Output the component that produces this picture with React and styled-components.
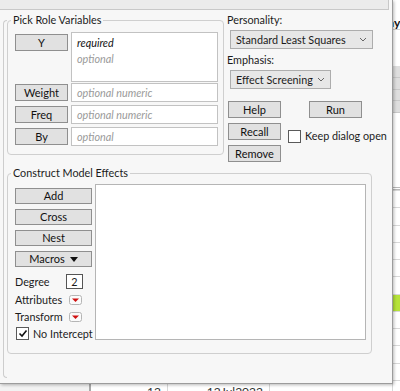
import React from 'react'
import styled, { createGlobalStyle } from 'styled-components'

const GlobalStyle = createGlobalStyle`
  html, body { margin: 0; padding: 0; background: #fff; }
  * { box-sizing: border-box; }
`

const Stage = styled.div`
  position: relative;
  width: 400px;
  height: 391px;
  overflow: hidden;
  background: #fff;
  font-family: Lato, "Open Sans", sans-serif;
  font-size: 10.8px;
  color: #1b1b1b;
  white-space: nowrap;
`

/* data table behind the dialog */
const Table = styled.div`
  display: flex;
  flex-direction: column;
  width: 400px;
`
const HeadRow = styled.div`
  display: grid;
  grid-template-columns: 379px 1fr;
  height: 30px;
  padding-top: 16px;
  line-height: 14px;
  border-bottom: 1px solid #d0d0d0;
  font-weight: 700;
  font-size: 12px;
  color: #111;
`
const Spacer = styled.div`
  height: ${p => p.$h}px;
  flex: none;
  border-bottom: ${p => (p.$double ? '3px double #b8b8b8' : 'none')};
`
const BandRow = styled.div`
  height: 11.75px;
  flex: none;
  background: #dedede;
  border-bottom: 1px solid #c9c9c9;
`
const BodyRow = styled.div`
  display: grid;
  grid-template-columns: 91px 77px 102px 123px 1fr;
  height: 17.25px;
  flex: none;
  border-top: 1px solid #d8d8d8;
`
const Cell = styled.div`
  border-right: ${p => (p.$head ? '2px solid #a9a9a9' : '1px solid #d8d8d8')};
  background: ${p => (p.$lime ? '#b6e33a' : p.$head ? '#f2f2f2' : 'transparent')};
  text-align: right;
  padding: 3px 6px 0;
  line-height: 16px;
  color: #333;
  font-size: 12px;
`

/* dialog */
const Dialog = styled.div`
  position: absolute;
  top: 0;
  left: 0;
  width: 393px;
  height: 384px;
  background: #f7f7f7;
  border-right: 1px solid #9c9c9c;
  border-bottom: 1px solid #9c9c9c;
  box-shadow: 1px 1px 3px rgba(0, 0, 0, 0.28);
  display: flex;
  flex-direction: column;
`
const TopStrip = styled.div`
  width: 389px;
  height: 10px;
  flex: none;
  background: #ebebeb;
  border-bottom: 1px solid #c8c8c8;
  border-right: 1px solid #c8c8c8;
`
const Body = styled.div`
  display: flex;
  align-items: flex-start;
  flex: 1;
  padding-left: 3px;
`
const FrameEdge = styled.div`
  flex: none;
  width: 4px;
  height: 358px;
  margin-top: 10px;
  border: 1px solid #cdcdcd;
  border-right: none;
  border-radius: 4px 0 0 4px;
`
const Content = styled.div`
  flex: 1;
  padding-top: 3px;
  display: grid;
  grid-template-columns: 217px 1fr;
  column-gap: 3px;
  align-items: start;
  align-content: start;
`
const Group = styled.fieldset`
  margin: ${p => (p.$wide ? '4px 0 0' : '0')};
  grid-column: ${p => (p.$wide ? '1 / -1' : 'auto')};
  width: ${p => (p.$wide ? '365px' : 'auto')};
  min-width: 0;
  padding: ${p => (p.$wide ? '4px 5px 11px 7px' : '5px 5px 8px 7px')};
  border: 1px solid #cfcfcf;
  border-radius: 4px;
`
const Legend = styled.legend`
  margin-left: -4px;
  padding: 0 2px;
  line-height: 14px;
  color: #1b1b1b;
`

/* pick role */
const Roles = styled.div`
  display: flex;
  flex-direction: column;
  gap: 3px;
`
const RoleRow = styled.div`
  display: flex;
  gap: 3px;
  align-items: ${p => (p.$top ? 'flex-start' : 'center')};
  margin-bottom: ${p => (p.$top ? '-2px' : '0')};
`
const Button = styled.button`
  flex: none;
  width: ${p => p.$w || 53}px;
  height: ${p => p.$h || 17}px;
  margin: ${p => p.$m || 0};
  padding: 0;
  border: 1px solid #8f8f8f;
  background: #e1e1e1;
  font-family: inherit;
  font-size: 11px;
  line-height: 14px;
  color: #111;
  display: flex;
  align-items: center;
  justify-content: center;
  gap: 5px;
`
const ListBox = styled.div`
  flex: 1;
  height: 50px;
  padding: 2px 5px;
  background: #fff;
  border: 1px solid #c2c2c2;
  line-height: 16px;
`
const Field = styled.div`
  flex: 1;
  height: 19px;
  padding: 0 5px;
  background: #fff;
  border: 1px solid #c2c2c2;
  line-height: 17px;
`
const Hint = styled.div`
  font-style: italic;
  color: ${p => (p.$strong ? '#111' : '#9a9a9a')};
`

/* right column */
const Side = styled.div`
  display: flex;
  flex-direction: column;
  align-items: flex-start;
`
const Label = styled.div`
  line-height: 14px;
  margin-top: ${p => p.$mt || 0}px;
`
const Select = styled.div`
  width: ${p => p.$w}px;
  height: 19px;
  margin: 3px 0 0 3px;
  padding: 0 5px;
  background: #e7e7e7;
  border: 1px solid #adadad;
  display: flex;
  align-items: center;
  justify-content: space-between;
`
const ButtonRow = styled.div`
  display: flex;
  align-items: flex-start;
  gap: ${p => p.$gap || 0}px;
  margin: ${p => p.$m || '0'};
`
const CheckLine = styled.label`
  display: flex;
  align-items: center;
  gap: 4px;
  margin-top: ${p => p.$mt || 0}px;
  margin-left: ${p => p.$ml || 0}px;
  line-height: 14px;
`
const Box = styled.span`
  flex: none;
  width: ${p => p.$s}px;
  height: ${p => p.$s}px;
  background: #fff;
  border: 1px solid #5a5a5a;
  display: flex;
  align-items: center;
  justify-content: center;
`

/* construct model effects */
const Effects = styled.div`
  display: grid;
  grid-template-columns: 77px 1fr;
  column-gap: 3px;
`
const Controls = styled.div`
  display: flex;
  flex-direction: column;
  padding-top: 4px;
`
const Stack = styled.div`
  display: flex;
  flex-direction: column;
  gap: 5px;
  margin-bottom: 6px;
`
const OptionRow = styled.div`
  display: flex;
  align-items: center;
  height: 17px;
  margin-top: ${p => p.$mt || 0}px;
`
const OptionName = styled.span`
  width: ${p => p.$w}px;
  flex: none;
`
const Degree = styled.span`
  width: 17px;
  height: 15px;
  background: #fff;
  border: 1px solid #555;
  text-align: center;
  line-height: 13px;
`
const EffectList = styled.div`
  height: 156px;
  background: #fff;
  border: 1px solid #b5b5b5;
`

const Chevron = () => (
  <svg width="8" height="5" viewBox="0 0 8 5">
    <polyline points="1,1 4,4 7,1" fill="none" stroke="#666" strokeWidth="1" />
  </svg>
)

const BlackCaret = () => (
  <svg width="8" height="5" viewBox="0 0 8 5">
    <polygon points="0,0 8,0 4,5" fill="#111" />
  </svg>
)

const RedMenu = () => (
  <svg width="13" height="10" viewBox="0 0 13 10">
    <rect x="0.5" y="0.5" width="12" height="9" rx="2" fill="#fafafa" stroke="#b5b5b5" />
    <polygon points="3,3.5 10,3.5 6.5,7" fill="#d01010" />
  </svg>
)

const Tick = () => (
  <svg width="10" height="9" viewBox="0 0 10 9">
    <polyline points="1.5,4.5 4,7 8.5,1.5" fill="none" stroke="#111" strokeWidth="1.6" />
  </svg>
)

const bodyRows = Array.from({ length: 12 }, (_, i) => i)

export default function App() {
  return (
    <Stage>
      <GlobalStyle />
      <Table>
        <HeadRow>
          <span />
          <span>Days</span>
        </HeadRow>
        <Spacer $h={36} />
        <BandRow />
        <BandRow />
        <BandRow />
        <BandRow />
        <Spacer $h={77} $double />
        {bodyRows.map(i => (
          <BodyRow key={i}>
            <Cell $head />
            <Cell>{i === 11 ? '12' : ''}</Cell>
            <Cell>{i === 11 ? '12Jul2022' : ''}</Cell>
            <Cell />
            <Cell $lime={i === 6} />
          </BodyRow>
        ))}
      </Table>

      <Dialog>
        <TopStrip />
        <Body>
          <FrameEdge />
          <Content>
            <Group>
              <Legend>Pick Role Variables</Legend>
              <Roles>
                <RoleRow $top>
                  <Button $m="2px 0 0">Y</Button>
                  <ListBox>
                    <Hint $strong>required</Hint>
                    <Hint>optional</Hint>
                  </ListBox>
                </RoleRow>
                <RoleRow>
                  <Button>Weight</Button>
                  <Field><Hint>optional numeric</Hint></Field>
                </RoleRow>
                <RoleRow>
                  <Button>Freq</Button>
                  <Field><Hint>optional numeric</Hint></Field>
                </RoleRow>
                <RoleRow>
                  <Button>By</Button>
                  <Field><Hint>optional</Hint></Field>
                </RoleRow>
              </Roles>
            </Group>

            <Side>
              <Label>Personality:</Label>
              <Select $w={143}>
                <span>Standard Least Squares</span>
                <Chevron />
              </Select>
              <Label $mt={4}>Emphasis:</Label>
              <Select $w={101}>
                <span>Effect Screening</span>
                <Chevron />
              </Select>
              <ButtonRow $gap={28} $m="12px 0 0 1px">
                <Button>Help</Button>
                <Button>Run</Button>
              </ButtonRow>
              <ButtonRow $m="5px 0 0 1px">
                <Button>Recall</Button>
                <CheckLine $mt={6} $ml={7}>
                  <Box $s={13} />
                  Keep dialog open
                </CheckLine>
              </ButtonRow>
              <ButtonRow $m="2px 0 0 1px">
                <Button>Remove</Button>
              </ButtonRow>
            </Side>

            <Group $wide>
              <Legend>Construct Model Effects</Legend>
              <Effects>
                <Controls>
                  <Stack>
                    <Button $w={77} $h={16}>Add</Button>
                    <Button $w={77} $h={16}>Cross</Button>
                    <Button $w={77} $h={16}>Nest</Button>
                    <Button $w={77} $h={16}>Macros <BlackCaret /></Button>
                  </Stack>
                  <OptionRow>
                    <OptionName $w={51}>Degree</OptionName>
                    <Degree>2</Degree>
                  </OptionRow>
                  <OptionRow $mt={1}>
                    <OptionName $w={54}>Attributes</OptionName>
                    <RedMenu />
                  </OptionRow>
                  <OptionRow>
                    <OptionName $w={54}>Transform</OptionName>
                    <RedMenu />
                  </OptionRow>
                  <OptionRow>
                    <CheckLine $ml={1}>
                      <Box $s={13}><Tick /></Box>
                      No Intercept
                    </CheckLine>
                  </OptionRow>
                </Controls>
                <EffectList />
              </Effects>
            </Group>
          </Content>
        </Body>
      </Dialog>
    </Stage>
  )
}
